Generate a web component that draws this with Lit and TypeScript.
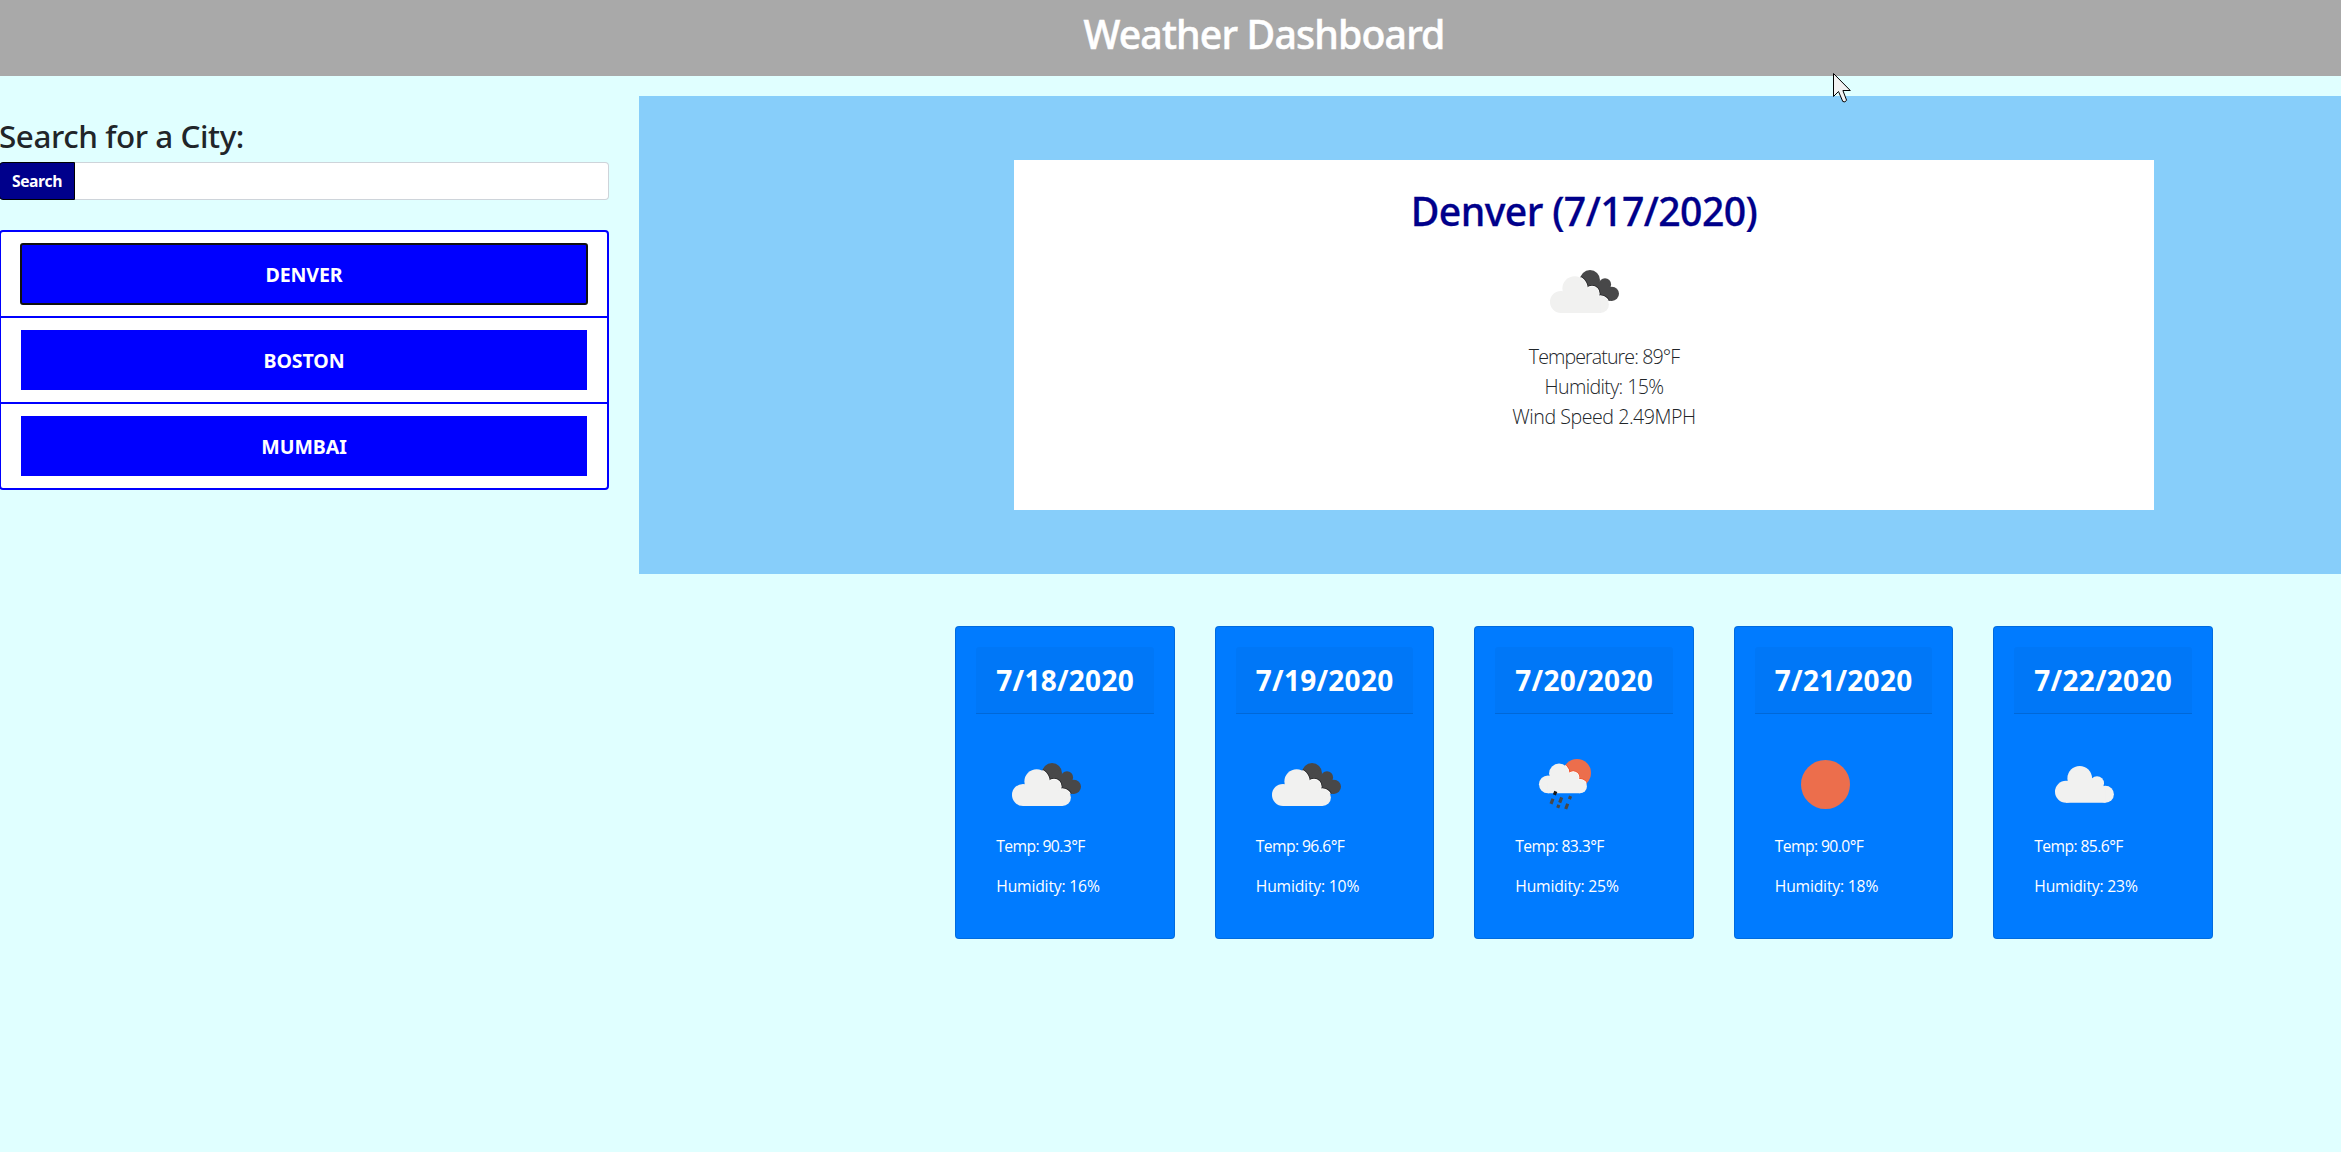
import { LitElement, html, svg, css, nothing } from "lit";
import { customElement, property } from "lit/decorators.js";

type Sky = "broken" | "rain" | "clear" | "scattered";

interface Day {
  date: string;
  sky: Sky;
  temp: string;
  humidity: string;
}

const FORECAST: Day[] = [
  { date: "7/18/2020", sky: "broken", temp: "90.3", humidity: "16" },
  { date: "7/19/2020", sky: "broken", temp: "96.6", humidity: "10" },
  { date: "7/20/2020", sky: "rain", temp: "83.3", humidity: "25" },
  { date: "7/21/2020", sky: "clear", temp: "90.0", humidity: "18" },
  { date: "7/22/2020", sky: "scattered", temp: "85.6", humidity: "23" },
];

const CITIES = ["DENVER", "BOSTON", "MUMBAI"];

// Cloud outline: four lobes over a flat base.
const cloudParts = () => svg`
  <circle cx="45.7" cy="45.3" r="12.3" />
  <circle cx="32" cy="58.7" r="11" />
  <circle cx="63" cy="50.3" r="7" />
  <circle cx="71.4" cy="61.2" r="8.5" />
  <path d="M32 69.7 V52 L40 46 H57 L66 52 L71.4 57 V69.7 Z" />`;

const darkCloudParts = () => svg`
  <circle cx="56" cy="40" r="10" />
  <circle cx="71" cy="44.4" r="6.1" />
  <circle cx="77.9" cy="53.8" r="7.1" />
  <path d="M50 44 L62 36 L66 42 L74 44 L78 50 L78 60.8 L60 60 Z" />`;

@customElement("weather-icon")
export class WeatherIcon extends LitElement {
  static styles = css`
    :host { display: block; width: 100px; height: 100px; }
    svg { display: block; width: 100px; height: 100px; }
    .light { fill: #f1f1f0; }
    .rim { fill: #fff; stroke: #fff; stroke-width: 1.4; }
    .shade { fill: #28282a; stroke: #28282a; stroke-width: 3; }
    .glow { fill: #f0512c; stroke: #f0512c; stroke-width: 3; }
    .dark { fill: #484849; }
    .sun { fill: #ec6e4c; }
    .drops { stroke: #484849; stroke-width: 3.2; fill: none; }
    .first { stroke: #151515; }
  `;

  @property() sky: Sky = "clear";

  private drawing() {
    switch (this.sky) {
      case "clear":
        return svg`<circle class="sun" cx="50.5" cy="51.5" r="24.5" />`;
      case "scattered":
        return svg`<g class="light">${cloudParts()}</g>`;
      case "broken":
        return svg`
          <clipPath id="back">${darkCloudParts()}</clipPath>
          <g class="dark">${darkCloudParts()}</g>
          <g clip-path="url(#back)">
            <g class="shade" transform="translate(-5 3.2)">${cloudParts()}</g>
            <g class="rim" transform="translate(-5 3.2)">${cloudParts()}</g>
          </g>
          <g class="light" transform="translate(-5 3.2)">${cloudParts()}</g>`;
      case "rain":
        return svg`
          <clipPath id="disc"><circle cx="62" cy="40" r="14" /></clipPath>
          <circle class="sun" cx="62" cy="40" r="14" />
          <g clip-path="url(#disc)">
            <g class="glow" transform="translate(6.9 3.6) scale(.8136)">${cloudParts()}</g>
            <g class="rim" transform="translate(6.9 3.6) scale(.8136)">${cloudParts()}</g>
          </g>
          <g class="light" transform="translate(6.9 3.6) scale(.8136)">${cloudParts()}</g>
          <path class="drops" d="M36 70.9 L38 65.7 M44.7 69.6 L46.7 64.4 M54.4 66.2 L55.6 63.2 M42.7 74.8 L43.9 71.8 M50.7 76 L52.7 70.8" />
          <path class="drops first" d="M39.4 61.9 L40.8 58.4" />`;
      default:
        return nothing;
    }
  }

  render() {
    return html`<svg viewBox="0 0 100 100" aria-hidden="true">${this.drawing()}</svg>`;
  }
}

@customElement("forecast-card")
export class ForecastCard extends LitElement {
  static styles = css`
    :host {
      display: block;
      box-sizing: border-box;
      width: 219.5px;
      height: 313px;
      padding: 20px;
      border: 1px solid rgba(0, 0, 0, 0.125);
      border-radius: 4px;
      background: #007bff;
      color: #fff;
    }
    .head {
      box-sizing: border-box;
      height: 67px;
      padding: 17px 0 0 20px;
      border-bottom: 1px solid rgba(0, 0, 0, 0.125);
      border-radius: 3px 3px 0 0;
      background: rgba(0, 0, 0, 0.03);
      font-size: 28px;
      font-weight: 700;
      line-height: 33.6px;
      letter-spacing: 0.28px;
      white-space: nowrap;
    }
    .body { padding: 19px 0 0 20px; }
    .line {
      margin: 1px 0 16px;
      font-size: 15.7px;
      line-height: 24px;
      white-space: nowrap;
    }
    .temp { letter-spacing: -0.59px; }
    .humidity { letter-spacing: -0.18px; }
  `;

  @property({ attribute: false }) day!: Day;

  render() {
    const { date, sky, temp, humidity } = this.day;
    return html`
      <div class="head">${date}</div>
      <div class="body">
        <weather-icon .sky=${sky}></weather-icon>
        <p class="line temp">Temp: ${temp}°F</p>
        <p class="line humidity">Humidity: ${humidity}%</p>
      </div>`;
  }
}

@customElement("app-root")
export class AppRoot extends LitElement {
  static styles = css`
    :host {
      display: block;
      position: relative;
      box-sizing: border-box;
      width: 100%;
      height: 1152px;
      overflow: hidden;
      background: #e0ffff;
      color: #212529;
      font-family: "Open Sans", "Noto Sans", sans-serif;
    }
    .page { width: 2530px; margin-left: -1px; }
    .bar {
      box-sizing: border-box;
      height: 76px;
      padding-top: 10px;
      background: #a9a9a9;
      color: #fff;
    }
    .title {
      margin: 0;
      font: 500 39.2px/48px "Noto Sans", "Open Sans", sans-serif;
      letter-spacing: -0.83px;
      text-align: center;
      -webkit-text-stroke: 0.5px currentColor;
    }
    .columns { display: flex; margin-top: 20px; }
    .side { flex: none; width: 610px; margin-right: 30px; padding-top: 21px; }
    .label {
      margin: 0;
      font: 500 31.4px/38px "Noto Sans", "Open Sans", sans-serif;
      letter-spacing: -0.43px;
      height: 45px;
    }
    .search { display: flex; height: 38px; }
    .go {
      box-sizing: border-box;
      width: 76px;
      padding: 0;
      border: 1px solid #000;
      border-radius: 4px 0 0 4px;
      background: #00008b;
      color: #fff;
      font: 700 15.7px/24px "Open Sans", "Noto Sans", sans-serif;
      letter-spacing: -0.48px;
    }
    .field {
      box-sizing: border-box;
      flex: 1;
      min-width: 0;
      border: 1px solid #ced4da;
      border-left: 0;
      border-radius: 0 4px 4px 0;
      background: #fff;
    }
    .cities {
      margin: 30px 0 0;
      padding: 0;
      list-style: none;
      border: 2px solid #00f;
      border-radius: 4px;
      background: #fff;
    }
    .city { padding: 12px 20px; }
    .city + .city { border-top: 2px solid #00f; }
    .pick {
      display: block;
      box-sizing: border-box;
      width: 100%;
      height: 60px;
      padding: 2px 0 0;
      border: 0;
      background: #00f;
      color: #fff;
      font: 700 19.6px/30px "Noto Sans", "Open Sans", sans-serif;
      letter-spacing: -0.1px;
    }
    .picked { border-radius: 2px; outline: 2px solid #101010; outline-offset: -1px; }
    .main { flex: 1; min-width: 0; }
    .hero {
      box-sizing: border-box;
      height: 478px;
      padding: 64px 375px;
      background: #87cefa;
    }
    .today {
      box-sizing: border-box;
      height: 350px;
      padding-top: 27px;
      background: #fff;
      display: flex;
      flex-direction: column;
      align-items: center;
    }
    .place {
      margin: 0 0 5px;
      font: 500 39.2px/48px "Noto Sans", "Open Sans", sans-serif;
      letter-spacing: -0.6px;
      color: #00008b;
      -webkit-text-stroke: 0.3px currentColor;
    }
    .facts {
      margin: 2px 0 0;
      padding: 0 0 0 40px;
      list-style: none;
      font-size: 19.6px;
      font-weight: 300;
      line-height: 30px;
      text-align: center;
    }
    .t { letter-spacing: -0.9px; }
    .h { letter-spacing: -0.62px; }
    .w { letter-spacing: -0.45px; }
    .days {
      display: flex;
      justify-content: center;
      gap: 40px;
      margin-top: 52px;
    }
    .pointer { position: absolute; left: 1833px; top: 73px; }
  `;

  render() {
    return html`
      <div class="page">
        <header class="bar"><h1 class="title">Weather Dashboard</h1></header>
        <div class="columns">
          <aside class="side">
            <h2 class="label">Search for a City:</h2>
            <div class="search">
              <button class="go">Search</button>
              <input class="field" type="text" />
            </div>
            <ul class="cities">
              ${CITIES.map(
                (city, i) => html`<li class="city">
                  <button class=${i === 0 ? "pick picked" : "pick"}>${city}</button>
                </li>`
              )}
            </ul>
          </aside>
          <main class="main">
            <section class="hero">
              <div class="today">
                <h2 class="place">Denver (7/17/2020)</h2>
                <weather-icon sky="broken"></weather-icon>
                <ul class="facts">
                  <li class="t">Temperature: 89°F</li>
                  <li class="h">Humidity: 15%</li>
                  <li class="w">Wind Speed 2.49MPH</li>
                </ul>
              </div>
            </section>
            <section class="days">
              ${FORECAST.map((day) => html`<forecast-card .day=${day}></forecast-card>`)}
            </section>
          </main>
        </div>
      </div>
      <svg class="pointer" width="20" height="31" viewBox="0 0 20 31" aria-hidden="true">
        <path d="M.5 .5 V23.5 L5.5 18.5 L9.8 28.5 Q12 29.8 13.6 27.3 L9.9 17.5 H17.3 Z" fill="#f2f2f2" stroke="#000" stroke-width="1" />
      </svg>`;
  }
}
